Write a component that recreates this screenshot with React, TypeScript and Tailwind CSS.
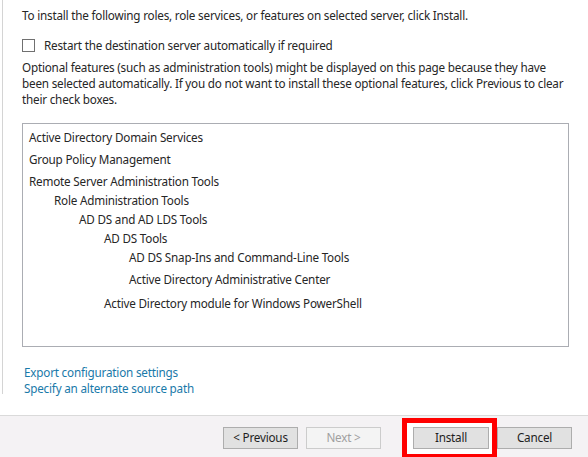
const items: { label: string; level: number; mt: string }[] = [
  { label: "Active Directory Domain Services", level: 0, mt: "mt-0" },
  { label: "Group Policy Management", level: 0, mt: "mt-[6px]" },
  { label: "Remote Server Administration Tools", level: 0, mt: "mt-[6px]" },
  { label: "Role Administration Tools", level: 1, mt: "mt-[3px]" },
  { label: "AD DS and AD LDS Tools", level: 2, mt: "mt-[3px]" },
  { label: "AD DS Tools", level: 3, mt: "mt-[3px]" },
  { label: "AD DS Snap-Ins and Command-Line Tools", level: 4, mt: "mt-[3px]" },
  { label: "Active Directory Administrative Center", level: 4, mt: "mt-[6px]" },
  { label: "Active Directory module for Windows PowerShell", level: 3, mt: "mt-[8px]" },
]

const indent = ["pl-0", "pl-[25px]", "pl-[50px]", "pl-[75px]", "pl-[100px]"]

function Button({ label, disabled }: { label: string; disabled?: boolean }) {
  return (
    <button
      className={
        disabled
          ? "w-[75px] h-[22px] border border-[#cccccc] bg-[#f4f4f4] text-[#a0a0a0] leading-none"
          : "w-[75px] h-[22px] border border-[#adadad] bg-[#e1e1e1] text-[#1e1e1e] leading-none"
      }
    >
      {label}
    </button>
  )
}

export default function App() {
  return (
    <div
      className="w-[588px] h-[457px] bg-white flex flex-col text-[#262626] text-[11.7px] tracking-[-0.2px] leading-[16px] overflow-hidden"
      style={{ fontFamily: '"Noto Sans", "Open Sans", sans-serif' }}
    >
      <div className="flex-1 pl-[2px]">
        <div className="h-[394px] border-l border-[#d4d4d4] pl-[19px] pt-[7px]">
          <p>To install the following roles, role services, or features on selected server, click Install.</p>

          <label className="flex items-center mt-[14px] h-[16px]">
            <span className="w-[13px] h-[13px] border border-[#707070] bg-white" />
            <span className="ml-[9px]">Restart the destination server automatically if required</span>
          </label>

          <p className="mt-[6px]">
            Optional features (such as administration tools) might be displayed on this page because they have
            <br />
            been selected automatically. If you do not want to install these optional features, click Previous to clear
            <br />
            their check boxes.
          </p>

          <div className="mt-[16px] w-[547px] h-[224px] border border-[#abadb3] pl-[6px] pt-[5px]">
            {items.map((it) => (
              <div key={it.label} className={`${it.mt} ${indent[it.level]}`}>
                {it.label}
              </div>
            ))}
          </div>

          <div className="mt-[17px] pl-[2px] text-[#1979a9]">
            <a className="block">Export configuration settings</a>
            <a className="block">Specify an alternate source path</a>
          </div>
        </div>
      </div>

      <div className="h-[42px] border-t border-[#dadada] bg-[#f4f2f4] flex items-start pt-[11px] pr-[16px] justify-end">
        <Button label="< Previous" />
        <div className="ml-[8px]">
          <Button label="Next >" disabled />
        </div>
        <div className="relative ml-[32px]">
          <div className="absolute left-[-11px] right-[-8px] top-[-9px] bottom-[-10px] border-[5px] border-[#ff0000] bg-white" />
          <div className="relative w-[76px]">
            <button className="w-[76px] h-[22px] border border-[#adadad] bg-[#e1e1e1] text-[#1e1e1e] leading-none">
              Install
            </button>
          </div>
        </div>
        <div className="ml-[8px]">
          <Button label="Cancel" />
        </div>
      </div>
    </div>
  )
}
